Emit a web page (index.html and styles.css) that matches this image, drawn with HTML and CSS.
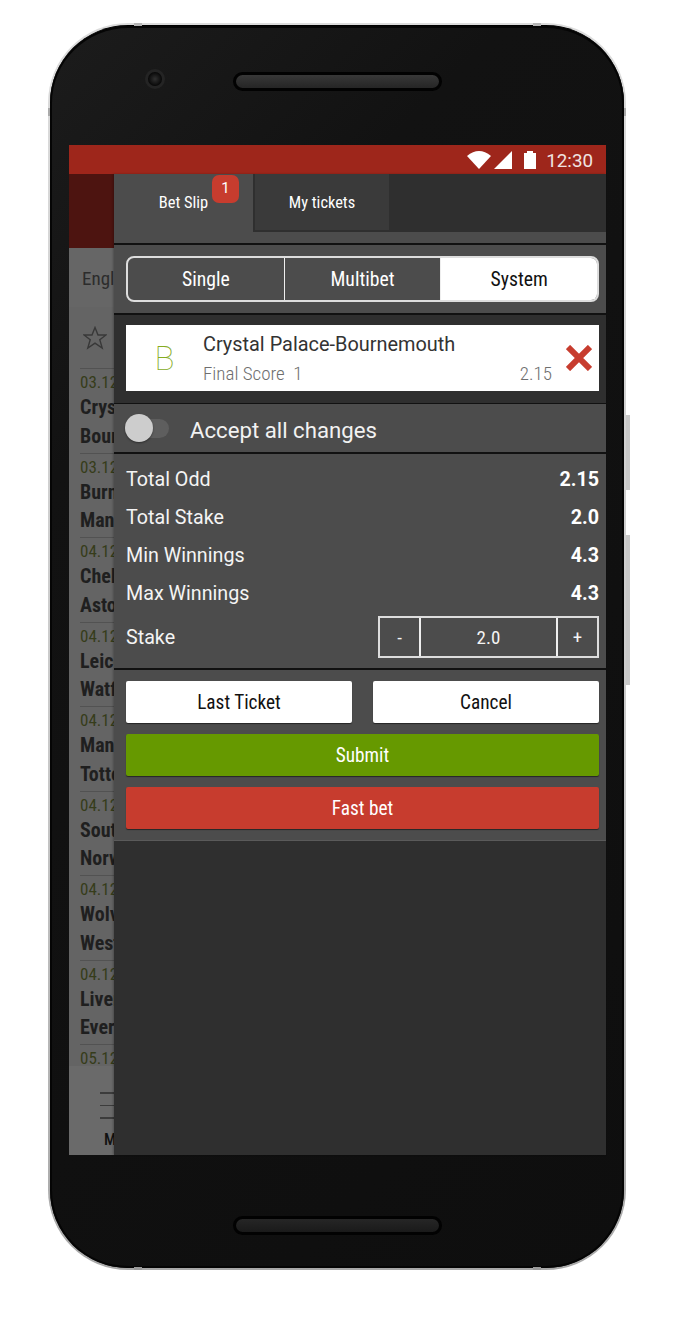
FILE: index.html
```html
<!DOCTYPE html>
<html lang="en">
<head>
  <meta charset="UTF-8" />
  <title>Bet Slip</title>
  <link rel="stylesheet" href="styles.css">
</head>
<body>
  <div class="phone">
    <span class="side-btn side-btn-top"></span>
    <span class="side-btn side-btn-low"></span>
    <span class="band band-tl"></span>
    <span class="band band-tr"></span>
    <span class="band band-bl"></span>
    <span class="band band-br"></span>
    <span class="band-side band-sl"></span>
    <span class="band-side band-sr"></span>
    <div class="bezel">
      <div class="bezel-top">
        <span class="camera"></span>
        <span class="speaker"></span>
      </div>
      <div class="screen">
        <div class="statusbar">
          <svg class="ic-wifi" viewBox="0 0 24 18"><path d="M0 5Q12 -5 24 5L12 18Z"/></svg>
          <svg class="ic-signal" viewBox="0 0 18 18"><path d="M18 0V18H0Z"/></svg>
          <svg class="ic-battery" viewBox="0 0 12 18"><path d="M3 2V0H9V2H12V18H0V2Z"/></svg>
          <span class="clock">12:30</span>
        </div>
        <div class="screen-body">
          <div class="app">
            <div class="app-inner">
              <div class="app-head"></div>
              <div class="league cond">English Premier League</div>
              <div class="favs">
                <svg class="ic-star" viewBox="0 0 24 24"><path d="M12 1.5L15 9H23L16.8 13.8L19.2 22L12 17.2L4.8 22L7.2 13.8L1 9H9Z"/></svg>
              </div>
              <div class="match"><div class="date cond">03.12</div><div class="team cond">Crystal Palace</div><div class="team cond">Bournemouth</div></div>
              <div class="match"><div class="date cond">03.12</div><div class="team cond">Burnley</div><div class="team cond">Manchester City</div></div>
              <div class="match"><div class="date cond">04.12</div><div class="team cond">Chelsea</div><div class="team cond">Aston Villa</div></div>
              <div class="match"><div class="date cond">04.12</div><div class="team cond">Leicester</div><div class="team cond">Watford</div></div>
              <div class="match"><div class="date cond">04.12</div><div class="team cond">Manchester Utd</div><div class="team cond">Tottenham</div></div>
              <div class="match"><div class="date cond">04.12</div><div class="team cond">Southampton</div><div class="team cond">Norwich</div></div>
              <div class="match"><div class="date cond">04.12</div><div class="team cond">Wolverhampton</div><div class="team cond">West Ham</div></div>
              <div class="match"><div class="date cond">04.12</div><div class="team cond">Liverpool</div><div class="team cond">Everton</div></div>
              <div class="match match-last"><div class="date cond">05.12</div></div>
              <div class="app-menu">
                <div class="burger"><span></span><span></span><span></span></div>
                <div class="menu-label cond">Menu</div>
              </div>
            </div>
          </div>
          <div class="drawer">
            <div class="tabs">
              <div class="tab tab-active cond">Bet Slip<span class="badge">1</span></div>
              <div class="tab tab-idle cond">My tickets</div>
            </div>
            <div class="strip"></div>
            <div class="types">
              <div class="segmented cond">
                <div class="seg">Single</div>
                <div class="seg">Multibet</div>
                <div class="seg seg-on">System</div>
              </div>
            </div>
            <div class="picks">
              <div class="pick">
                <div class="pick-mark">B</div>
                <div class="pick-main">
                  <div class="pick-title">Crystal Palace-Bournemouth</div>
                  <div class="pick-sub"><span>Final Score&nbsp;&nbsp;1</span><span>2.15</span></div>
                </div>
                <svg class="ic-close" viewBox="0 0 26 26"><path d="M2 2L24 24M24 2L2 24"/></svg>
              </div>
            </div>
            <div class="accept">
              <div class="toggle"><span class="knob"></span></div>
              <span>Accept all changes</span>
            </div>
            <div class="totals">
              <div class="row"><span>Total Odd</span><b>2.15</b></div>
              <div class="row"><span>Total Stake</span><b>2.0</b></div>
              <div class="row"><span>Min Winnings</span><b>4.3</b></div>
              <div class="row"><span>Max Winnings</span><b>4.3</b></div>
              <div class="row row-stake">
                <span>Stake</span>
                <div class="stepper cond">
                  <div class="step">-</div>
                  <div class="step step-val">2.0</div>
                  <div class="step">+</div>
                </div>
              </div>
            </div>
            <div class="actions cond">
              <div class="btn-pair">
                <div class="btn btn-white">Last Ticket</div>
                <div class="btn btn-white">Cancel</div>
              </div>
              <div class="btn btn-green">Submit</div>
              <div class="btn btn-red">Fast bet</div>
            </div>
            <div class="drawer-rest"></div>
          </div>
        </div>
      </div>
      <div class="bezel-bottom">
        <span class="speaker"></span>
      </div>
    </div>
  </div>
</body>
</html>
```

FILE: styles.css
```css
html, body {
  margin: 0;
  background: #fff;
  font-family: Roboto, "Noto Sans", sans-serif;
}
.cond {
  font-stretch: 75%;
}

/* device */
.phone {
  position: relative;
  box-sizing: border-box;
  width: 578px;
  height: 1247px;
  margin: 23px 0 0 48px;
  padding: 2px;
  border-radius: 80px;
  background: linear-gradient(180deg, #dcdcdc 0%, #c8c8c8 60%, #a8a8a8 100%);
}
.bezel {
  box-sizing: border-box;
  height: 100%;
  padding: 0 18px 0 19px;
  border-radius: 78px;
  border-top: 1px solid #000;
  background: linear-gradient(135deg, #1c1c1c 0%, #121212 25%, #0e0e0e 100%);
  box-shadow: inset 0 0 0 2px #050505;
}
.bezel-top {
  position: relative;
  display: flex;
  justify-content: center;
  align-items: flex-start;
  height: 119px;
  padding-top: 46px;
  box-sizing: border-box;
}
.bezel-bottom {
  display: flex;
  justify-content: center;
  padding-top: 61px;
}
.speaker {
  box-sizing: border-box;
  width: 209px;
  height: 19px;
  border-radius: 10px;
  border: 3px solid #020202;
  background: linear-gradient(180deg, #383838, #252525);
}
.bezel-bottom .speaker {
  background: linear-gradient(180deg, #262626, #1a1a1a);
}
.camera {
  position: absolute;
  left: 76px;
  top: 43px;
  box-sizing: border-box;
  width: 20px;
  height: 20px;
  border-radius: 50%;
  border: 3px solid #242424;
  background: radial-gradient(circle, #303030 0, #080808 70%);
}
.side-btn {
  position: absolute;
  left: 100%;
  width: 4px;
  background: #c8c8c8;
}
.side-btn-top { top: 392px; height: 75px; }
.side-btn-low { top: 512px; height: 150px; }
.band {
  position: absolute;
  width: 8px;
  height: 3px;
  background: #b4b4b4;
}
.band-tl { left: 86px; top: 0; }
.band-tr { right: 85px; top: 0; }
.band-bl { left: 86px; bottom: 0; background: #999; }
.band-br { right: 85px; bottom: 0; background: #999; }
.band-side {
  position: absolute;
  top: 85px;
  width: 2px;
  height: 8px;
  background: #aaa;
}
.band-sl { left: 0; }
.band-sr { right: 0; }

/* screen */
.screen {
  height: 1010px;
  display: flex;
  flex-direction: column;
}
.statusbar {
  flex: none;
  height: 29px;
  box-sizing: border-box;
  display: flex;
  align-items: center;
  justify-content: flex-end;
  padding-right: 13px;
  background: #9e261b;
}
.statusbar svg {
  fill: #fff;
  height: 18px;
}
.ic-wifi { width: 24px; }
.ic-signal { width: 18px; margin-left: 3px; }
.ic-battery { width: 12px; margin-left: 12px; }
.clock {
  margin: 2px 0 0 10px;
  color: #f0e4e2;
  font-size: 18.8px;
}
.screen-body {
  flex: 1;
  display: flex;
  min-height: 0;
}

/* dimmed app behind the drawer */
.app {
  flex: none;
  width: 45px;
  overflow: hidden;
  background: #646464;
}
.app-inner {
  width: 300px;
}
.app-head {
  height: 74px;
  background: #4d1410;
}
.league {
  height: 59px;
  line-height: 61px;
  padding-left: 13px;
  font-size: 19px;
  color: #2c2c2c;
  background: #666;
}
.favs {
  height: 61px;
  box-sizing: border-box;
  padding: 19px 0 0 14px;
}
.ic-star {
  display: block;
  width: 24px;
  height: 24px;
  fill: none;
  stroke: #383838;
  stroke-width: 1.4;
}
.match {
  height: 84.5px;
  box-sizing: border-box;
  margin-left: 11px;
  padding-top: 4px;
  border-top: 1px solid #525252;
}
.date {
  height: 18px;
  line-height: 18px;
  font-size: 17px;
  color: #363c1a;
  margin-bottom: 2px;
}
.team {
  height: 28.5px;
  line-height: 28.5px;
  font-size: 20px;
  font-weight: 700;
  color: #1f1f1f;
}
.match-last {
  height: 22px;
}
.app-menu {
  height: 106px;
  box-sizing: border-box;
  padding-top: 26px;
  background: #6a6a6a;
}
.burger {
  margin-left: 31px;
  width: 40px;
}
.burger span {
  display: block;
  height: 1.5px;
  margin-bottom: 11px;
  background: #3c3c3c;
}
.menu-label {
  margin: 6px 0 0 35px;
  font-size: 16px;
  font-weight: 500;
  color: #111;
}

/* drawer */
.drawer {
  flex: 1;
  display: flex;
  flex-direction: column;
  background: #2f2f2f;
  box-shadow: -1px 0 2px rgba(0,0,0,0.25);
}
.tabs {
  display: flex;
  height: 58px;
  gap: 2px;
}
.tab {
  display: flex;
  align-items: center;
  justify-content: center;
  padding-bottom: 2px;
  box-sizing: border-box;
  color: #fff;
  font-size: 16.4px;
}
.tab-active {
  position: relative;
  width: 139px;
  background: #4c4c4c;
}
.tab-idle {
  width: 134px;
  background: #3a3a3a;
  border-bottom: 2px solid #2f2f2f;
  padding-bottom: 0;
}
.badge {
  position: absolute;
  right: 14px;
  top: 1px;
  width: 27px;
  height: 28px;
  line-height: 27px;
  text-align: center;
  border-radius: 7px;
  background: #c73c2e;
  font-size: 15px;
  font-stretch: 100%;
}
.strip {
  height: 11px;
  background: #4c4c4c;
  border-bottom: 2px solid #111;
}
.types {
  padding: 11px 7px 11px 12px;
  background: #4c4c4c;
  border-bottom: 2px solid #111;
}
.segmented {
  display: flex;
  height: 46px;
  box-sizing: border-box;
  border: 2px solid #ddd;
  border-radius: 8px;
  overflow: hidden;
  font-size: 19.7px;
  color: #fff;
}
.seg {
  flex: 1;
  display: flex;
  align-items: center;
  justify-content: center;
  border-right: 1px solid #eee;
}
.seg-on {
  border-right: 0;
  background: #fff;
  color: #111;
}
.picks {
  padding: 10px 7px 12px 12px;
  background: #2f2f2f;
  border-bottom: 1px solid #111;
}
.pick {
  display: flex;
  align-items: center;
  height: 66px;
  background: #fff;
}
.pick-mark {
  width: 77px;
  box-sizing: border-box;
  text-align: center;
  font-size: 33px;
  font-weight: 100;
  font-stretch: 90%;
  color: #86ac1f;
}
.pick-main {
  width: 349px;
  padding-top: 2px;
}
.pick-title {
  font-size: 19.9px;
  line-height: 28px;
  color: #333;
}
.pick-sub {
  display: flex;
  justify-content: space-between;
  margin-top: 2px;
  font-size: 19px;
  font-stretch: 85%;
  line-height: 26px;
  font-weight: 300;
  color: #6e6e6e;
}
.ic-close {
  flex: none;
  width: 26px;
  height: 26px;
  margin-left: 14px;
  fill: none;
  stroke: #c73c2e;
  stroke-width: 6;
}
.accept {
  display: flex;
  align-items: center;
  height: 48px;
  background: #4c4c4c;
  border-bottom: 2px solid #111;
  color: #f2f2f2;
  font-size: 22.2px;
}
.accept > span {
  padding-top: 3px;
}
.toggle {
  position: relative;
  flex: none;
  width: 42px;
  height: 19px;
  margin: 0 21px 0 13px;
  border-radius: 10px;
  background: #5e5e5e;
}
.knob {
  position: absolute;
  left: -2px;
  top: -5px;
  width: 28px;
  height: 28px;
  border-radius: 50%;
  background: #cdcdcd;
  box-shadow: 0 1px 2px rgba(0,0,0,0.4);
}
.totals {
  padding: 6px 7px 0 12px;
  background: #4c4c4c;
  border-bottom: 2px solid #111;
  color: #f4f4f4;
  font-size: 19.7px;
}
.row {
  display: flex;
  justify-content: space-between;
  align-items: center;
  height: 38px;
}
.row b {
  color: #fff;
}
.row-stake {
  box-sizing: border-box;
  height: 56px;
  padding-bottom: 6px;
}
.stepper {
  display: flex;
  width: 221px;
  height: 42px;
  box-sizing: border-box;
  border: 2px solid #ddd;
  font-size: 19px;
}
.step {
  box-sizing: border-box;
  width: 39px;
  display: flex;
  align-items: center;
  justify-content: center;
}
.step-val {
  flex: 1;
  border-left: 2px solid #eee;
  border-right: 2px solid #eee;
}
.actions {
  display: flex;
  flex-direction: column;
  gap: 11px;
  padding: 11px 7px 11px 12px;
  background: #4c4c4c;
  font-size: 19.3px;
  border-bottom: 1px solid #5a5a5a;
}
.btn-pair {
  display: flex;
  justify-content: space-between;
}
.btn {
  display: flex;
  align-items: center;
  justify-content: center;
  height: 42px;
  border-radius: 2px;
  box-shadow: 0 1px 1px rgba(0,0,0,0.5);
}
.btn-white {
  width: 226px;
  background: #fff;
  color: #111;
}
.btn-green {
  background: #669900;
  color: #fff;
}
.btn-red {
  background: #c73c2e;
  color: #fff;
}
.drawer-rest {
  flex: 1;
}
```
